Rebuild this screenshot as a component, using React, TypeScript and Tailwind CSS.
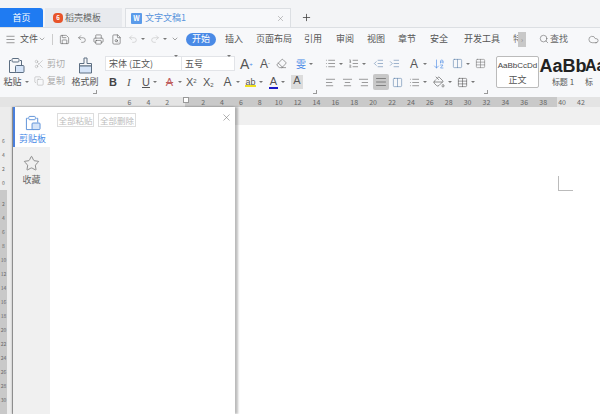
import {
  AlignCenter,
  AlignJustify,
  AlignLeft,
  AlignRight,
  ArrowDownAZ,
  ChevronDown,
  Cloud,
  Columns2,
  Copy,
  Eraser,
  FileSearch,
  IndentDecrease,
  IndentIncrease,
  List,
  ListOrdered,
  Menu,
  PaintBucket,
  Plus,
  Printer,
  Redo2,
  Save,
  Scissors,
  Search,
  Star,
  Table,
  Undo2,
  X,
} from 'lucide-react';

const FONT = 'font-["Noto_Sans_CJK_SC","Liberation_Sans",sans-serif]';

const tabsMenu = [
  { label: '插入', cls: 'ml-[9px] w-[15px]' },
  { label: '页面布局', cls: 'ml-[16px] w-[32px]' },
  { label: '引用', cls: 'ml-[16px] w-[15px]' },
  { label: '审阅', cls: 'ml-[17px] w-[15px]' },
  { label: '视图', cls: 'ml-[16px] w-[15px]' },
  { label: '章节', cls: 'ml-[16px] w-[16px]' },
  { label: '安全', cls: 'ml-[16px] w-[16px]' },
  { label: '开发工具', cls: 'ml-[18px] w-[32px]' },
];

const rulerTop = [2, 4, 6, 8, 10, 12, 14, 16, 18, 20, 22, 24, 26, 28, 30, 32, 34, 36, 38];

function Caret() {
  return <span className="w-0 h-0 shrink-0 border-x-[2px] border-x-transparent border-t-[2px] border-t-[#777] ml-[3px]" />;
}

function Launcher({ cls }: { cls: string }) {
  return <span className={`absolute bottom-[3px] w-[4px] h-[4px] border-r border-b border-[#999] ${cls}`} />;
}

function RulerNum({ n }: { n: number }) {
  return <span className="w-[18.9px] shrink-0 text-center text-[7px] text-[#666] leading-[10px]">{n}</span>;
}

function ClipIcon({ className }: { className: string }) {
  return (
    <svg viewBox="0 0 17 17" className={className} fill="none" stroke="currentColor" strokeWidth="1">
      <path d="M3 3.5H1.5v12H9" />
      <path d="M12 3.5h1.5V8" />
      <rect x="4" y="1.5" width="7" height="3.5" rx="1" />
      <rect x="7.5" y="8.5" width="8.5" height="7" rx="1" fill="#d5e4f8" />
    </svg>
  );
}

function BrushIcon({ className }: { className: string }) {
  return (
    <svg viewBox="0 0 17 17" className={className} fill="none" stroke="currentColor" strokeWidth="1">
      <path d="M7 1h3v5.5h4.5V9h-12V6.5H7z" />
      <path d="M2.5 9h12v7h-12z" fill="#d5e4f8" />
    </svg>
  );
}

export default function App() {
  return (
    <div className={`w-[600px] h-[414px] overflow-hidden bg-white flex flex-col text-[#555] ${FONT}`}>
      {/* title tabs */}
      <div className="h-[28px] bg-[#f3f4f6] flex items-end border-b border-[#dcdfe3] shrink-0">
        <div className="w-[43px] h-[19px] bg-[#1f7bf2] rounded-tr-[3px] flex items-center justify-center text-white text-[9px] shrink-0">首页</div>
        <div className="ml-[2px] w-[77px] h-[19px] bg-[#e8eaee] flex items-center pl-[8px] text-[9px] text-[#666] shrink-0">
          <span className="w-[10px] h-[10px] rounded-[4px] bg-[#e8542a] mr-[2px] flex items-center justify-center text-white text-[6px] font-bold">6</span>
          稻壳模板
        </div>
        <div className="ml-[3px] w-[166px] h-[19px] bg-[#f7f8fa] border border-b-0 border-[#dcdfe3] flex items-center pl-[5px] text-[9px] text-[#5a94dc] shrink-0">
          <span className="w-[11px] h-[11px] bg-[#5b9bea] rounded-[1px] mr-[3px] flex items-center justify-center text-white text-[7px] font-bold">W</span>
          文字文稿1
          <X size={9} strokeWidth={1.25} className="ml-auto mr-[5px] text-[#888]" />
        </div>
        <Plus size={11} strokeWidth={1.75} className="ml-[10px] mb-[4px] text-[#444]" />
      </div>

      {/* menu row */}
      <div className="h-[22px] bg-[#f7f8fa] flex items-center text-[9px] shrink-0 whitespace-nowrap">
        <Menu size={11} strokeWidth={1.25} className="ml-[5px] shrink-0" />
        <span className="ml-[4px] w-[16px] shrink-0">文件</span>
        <ChevronDown size={8} className="ml-[2px] text-[#888] shrink-0" />
        <span className="ml-[6px] w-px h-[11px] bg-[#ccc] shrink-0" />
        <Save size={11} strokeWidth={1.25} className="ml-[6px] shrink-0" />
        <Undo2 size={10} strokeWidth={1.25} className="ml-[7px] shrink-0" />
        <Printer size={11} strokeWidth={1.25} className="ml-[6px] shrink-0" />
        <FileSearch size={11} strokeWidth={1.25} className="ml-[7px] shrink-0" />
        <Undo2 size={10} strokeWidth={1.25} className="ml-[6px] text-[#bbb] shrink-0" />
        <Caret />
        <Redo2 size={10} strokeWidth={1.25} className="ml-[5px] text-[#bbb] shrink-0" />
        <Caret />
        <ChevronDown size={8} className="ml-[4px] text-[#777] shrink-0" />
        <span className="ml-[7px] w-[30px] h-[13px] rounded-full bg-[#4a8ae6] text-white flex items-center justify-center shrink-0">开始</span>
        {tabsMenu.map((t) => (
          <span key={t.label} className={`${t.cls} shrink-0`}>{t.label}</span>
        ))}
        <span className="ml-[17px] w-[5px] overflow-hidden text-[#777] shrink-0">特</span>
        <span className="w-[8px] h-[15px] bg-[#c8c8c8] text-[#888] text-[7px] flex items-center justify-center shrink-0">›</span>
        <Search size={10} strokeWidth={1.25} className="ml-[13px] shrink-0" />
        <span className="ml-[1px] text-[#666] shrink-0">查找</span>
        <Cloud size={11} strokeWidth={1.25} className="ml-[20px] text-[#666] shrink-0" />
      </div>

      {/* ribbon */}
      <div className="relative h-[47px] bg-[#f7f8fa] flex text-[9px] shrink-0 overflow-hidden whitespace-nowrap">
        <div className="ml-[4px] w-[24px] shrink-0 flex flex-col items-center pt-[7px]">
          <ClipIcon className="w-[17px] h-[17px] text-[#5c6e82]" />
          <span className="mt-[1px] flex items-center">粘贴<Caret /></span>
        </div>
        <div className="ml-[6px] w-[30px] shrink-0 flex flex-col pt-[7px] text-[#aaa]">
          <span className="flex items-center h-[14px]"><Scissors size={10} strokeWidth={1.25} className="mr-[3px] shrink-0" />剪切</span>
          <span className="flex items-center h-[14px] mt-[3px]"><Copy size={10} strokeWidth={1.25} className="mr-[3px] shrink-0" />复制</span>
        </div>
        <div className="ml-[8px] w-[26px] shrink-0 flex flex-col items-center pt-[7px]">
          <BrushIcon className="w-[17px] h-[17px] text-[#5c6e82]" />
          <span className="mt-[1px]">格式刷</span>
        </div>
        <Launcher cls="left-[93px]" />

        {/* font group */}
        <div className="ml-[7px] w-[213px] shrink-0 flex flex-col pt-[6px]">
          <div className="flex items-center h-[15px]">
            <div className="w-[77px] h-[15px] shrink-0 bg-white border border-[#e2e4e8] flex items-center px-[3px]">宋体 (正文)<span className="ml-auto"><Caret /></span></div>
            <div className="w-[53px] h-[15px] shrink-0 bg-white border border-l-0 border-[#e2e4e8] flex items-center px-[3px]">五号<span className="ml-auto"><Caret /></span></div>
            <span className="ml-[5px] w-[15px] text-[14px] leading-none font-['Liberation_Sans']">A<sup className="text-[6px] text-[#4a8ae6]">+</sup></span>
            <span className="w-[15px] ml-[5px] text-[12px] leading-none font-['Liberation_Sans']">A<sup className="text-[6px]">-</sup></span>
            <Eraser size={11} strokeWidth={1.25} className="ml-[1px] shrink-0" />
            <span className="ml-[9px] text-[10px] leading-none text-[#4a8ae6]">雯</span>
            <Caret />
          </div>
          <div className="flex items-center h-[16px] mt-[3px] text-[11px] leading-none font-['Liberation_Sans']">
            <span className="ml-[4px] w-[8px] font-bold text-[#444]">B</span>
            <span className="ml-[10px] w-[6px] font-['Liberation_Serif'] italic">I</span>
            <span className="ml-[9px] w-[8px] underline">U</span><Caret />
            <span className="ml-[7px] w-[11px] text-center text-[#c06060] line-through">A</span><Caret />
            <span className="ml-[4px] w-[10px]">X<sup className="text-[6px]">2</sup></span>
            <span className="ml-[7px] w-[11px]">X<sub className="text-[6px]">2</sub></span>
            <span className="ml-[8px] w-[11px] text-[12px] text-center">A</span><Caret />
            <span className="ml-[5px] w-[11px] bg-[linear-gradient(transparent_75%,#f0e020_75%)] text-[9px] text-center">ab</span><Caret />
            <span className="ml-[6px] w-[9px] text-center border-b-2 border-[#1a1ac8]">A</span><Caret />
            <span className="ml-[6px] w-[12px] h-[14px] bg-[#dcdcdc] text-center">A</span>
          </div>
        </div>
        <Launcher cls="left-[313px]" />

        {/* paragraph group */}
        <div className="ml-[7px] w-[170px] shrink-0 flex flex-col pt-[6px]">
          <div className="flex items-center h-[15px]">
            <List size={11} strokeWidth={1.25} className="shrink-0" /><Caret />
            <ListOrdered size={11} strokeWidth={1.25} className="ml-[5px] shrink-0" /><Caret />
            <IndentDecrease size={11} strokeWidth={1.25} className="ml-[7px] text-[#5a7fa8] shrink-0" />
            <IndentIncrease size={11} strokeWidth={1.25} className="ml-[5px] text-[#5a7fa8] shrink-0" />
            <span className="ml-[8px] w-[12px] text-[12px] leading-none text-center font-['Liberation_Sans']">A</span><Caret />
            <ArrowDownAZ size={12} strokeWidth={1.25} className="ml-[6px] text-[#4a8ae6] shrink-0" />
            <Columns2 size={11} strokeWidth={1.25} className="ml-[7px] text-[#5a7fa8] shrink-0" /><Caret />
            <Table size={11} strokeWidth={1.25} className="ml-[5px] text-[#777] shrink-0" />
          </div>
          <div className="flex items-center h-[16px] mt-[3px]">
            <AlignLeft size={11} strokeWidth={1.25} className="shrink-0" />
            <AlignCenter size={11} strokeWidth={1.25} className="ml-[6px] shrink-0" />
            <AlignRight size={11} strokeWidth={1.25} className="ml-[5px] shrink-0" />
            <span className="ml-[4px] w-[16px] h-[16px] shrink-0 bg-[#c8c8c8] rounded-[2px] flex items-center justify-center"><AlignJustify size={12} strokeWidth={1.25} /></span>
            <Columns2 size={11} strokeWidth={1.25} className="ml-[3px] text-[#5a7fa8] shrink-0" />
            <List size={11} strokeWidth={1.25} className="ml-[6px] shrink-0" /><Caret />
            <PaintBucket size={12} strokeWidth={1.25} className="ml-[6px] shrink-0" /><Caret />
            <Table size={11} strokeWidth={1.25} className="ml-[5px] shrink-0" /><Caret />
          </div>
        </div>
        <Launcher cls="left-[484px]" />

        {/* styles */}
        <div className="ml-[1px] pt-[6px] flex shrink-0">
          <div className="w-[43px] h-[32px] bg-white border border-[#bbb] rounded-[2px] flex flex-col items-center">
            <span className="font-['Liberation_Sans'] text-[8px] leading-[16px] mt-[1px] text-[#444]">AaBbCcDd</span>
            <span className="text-[9px] leading-[12px]">正文</span>
          </div>
          <div className="ml-[2px] w-[44px] flex flex-col items-center">
            <span className="font-['Liberation_Sans'] font-bold text-[18px] leading-[20px] text-[#222]">AaBb</span>
            <span className="text-[8px] leading-[12px]">标题 1</span>
          </div>
          <div className="w-[30px] flex flex-col">
            <span className="font-['Liberation_Sans'] font-bold text-[16px] leading-[20px] text-[#222]">Aa</span>
            <span className="text-[8px] leading-[12px]">标</span>
          </div>
        </div>
      </div>

      {/* rulers + document */}
      <div className="relative flex-1 flex flex-col min-h-0">
        <div className="relative h-[10px] bg-[#e4e4e4] flex shrink-0 pl-[120px] overflow-hidden">
          <RulerNum n={6} />
          <RulerNum n={4} />
          <RulerNum n={2} />
          <div className="flex bg-[#c9c9c9] w-[372px] shrink-0 ml-[8px] pl-[9px]">
            {rulerTop.map((n) => <RulerNum key={n} n={n} />)}
          </div>
          <span className="-ml-[4px] flex">
            <RulerNum n={40} />
            <RulerNum n={42} />
          </span>
          <span className="absolute left-[183px] top-0 w-[6px] h-[6px] bg-white border border-[#999]" />
        </div>
        <div className="flex-1 flex min-h-0">
          <div className="w-[13px] bg-[#ececec] border-r border-[#aaa] flex shrink-0 overflow-hidden">
            <div className="w-[7px] flex flex-col text-[5px] text-[#666] text-center">
              <div className="h-[83px] shrink-0 flex flex-col pt-[27px]">
                {[6, 4, 2, 0].map((n) => (
                  <span key={n} className="h-[14px] shrink-0 leading-[14px]">{n}</span>
                ))}
              </div>
              <div className="flex-1 bg-[#c9c9c9] flex flex-col pt-[7px]">
                {[2, 4, 6, 8, 10, 12, 14, 16, 18, 20, 22, 24, 26, 28, 30].map((n) => (
                  <span key={n} className="h-[14px] shrink-0 leading-[14px]">{n}</span>
                ))}
              </div>
            </div>
          </div>
          <div className="relative flex-1 flex flex-col">
            <div className="h-[18px] bg-[#f0f0f0] shrink-0" />
            <div className="flex-1 bg-white flex justify-end pt-[51px] pr-[27px]">
              <div className="w-[15px] h-[15px] border-l border-b border-[#bbb]" />
            </div>
          </div>
        </div>

        {/* clipboard pane */}
        <div className="absolute left-[13px] top-[10px] bottom-0 w-[222px] bg-white flex shadow-[3px_0_2px_rgba(0,0,0,0.25),-1px_0_2px_rgba(0,0,0,0.25)]">
          <div className="w-[37px] bg-[#f0f0f0] flex flex-col shrink-0">
            <div className="h-[40px] bg-white border-l-2 border-[#4a7fdc] flex flex-col items-center pt-[8px] text-[#4a8ae6] text-[9px]">
              <ClipIcon className="w-[16px] h-[16px] text-[#5a8fd8]" />
              <span className="mt-[1px] whitespace-nowrap">剪贴板</span>
            </div>
            <div className="flex flex-col items-center pt-[8px] text-[9px] text-[#666]">
              <Star size={17} strokeWidth={1} />
              <span className="mt-[1px]">收藏</span>
            </div>
          </div>
          <div className="flex-1 flex items-start pl-[7px] pt-[6px] text-[8.5px] text-[#bbb]">
            <span className="w-[37px] h-[14px] border border-[#ddd] flex items-center justify-center whitespace-nowrap">全部粘贴</span>
            <span className="ml-[4px] w-[38px] h-[14px] border border-[#ddd] flex items-center justify-center whitespace-nowrap">全部删除</span>
            <X size={11} strokeWidth={1.25} className="ml-auto mr-[3px] -mt-[1px] text-[#777]" />
          </div>
        </div>
      </div>
    </div>
  );
}
